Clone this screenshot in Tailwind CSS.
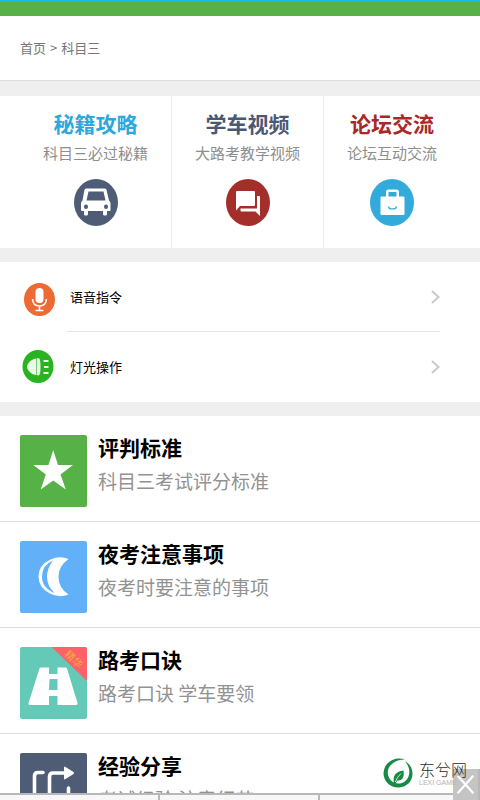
<!DOCTYPE html>
<html lang="zh-CN">
<head>
<meta charset="utf-8">
<meta name="viewport" content="width=device-width, initial-scale=1">
<title>科目三</title>
<script src="https://cdn.jsdelivr.net/npm/@tailwindcss/browser@4"></script>
</head>
<body class="flex h-screen flex-col overflow-hidden bg-[#efefef] font-['Noto_Sans_CJK_SC',sans-serif] text-black">
<header class="h-4 shrink-0 border-t-2 border-[#12bdea] bg-[#56b146]"></header>

<main class="min-h-0 flex-1 overflow-y-auto [scrollbar-width:none]">
  <nav aria-label="位置" class="flex h-[65px] items-center border-b border-[#dcdcdc] bg-white px-5 text-[13px] text-[#777]">
    <a href="#">首页</a><span class="px-1">&gt;</span><a href="#">科目三</a>
  </nav>

  <section class="mt-[15px] grid grid-cols-[152fr_152fr_136fr] bg-white px-5 text-center">
    <a href="#" class="flex h-[152px] flex-col items-center border-r border-[#ececec] pt-[11px]">
      <h2 class="text-[21px] leading-8 font-bold text-[#2ea7dc]">秘籍攻略</h2>
      <p class="text-[15px] leading-7 text-[#8e8e8e]">科目三必过秘籍</p>
      <svg class="mt-3 h-[47px] w-[44px]" viewBox="0 0 44 47">
        <ellipse cx="22" cy="23.500" rx="22" ry="23.500" fill="#4e5c77"/>
        <path fill="#fff" fill-rule="evenodd" d="M10.500 10.800Q11 9.500 12.500 9.500H30.500Q32 9.500 32.500 10.800L35 21.500Q36.500 22.500 36.500 24.500V31Q36.500 32 35.500 32H33V35Q33 36.500 31.500 36.500H30.500Q29 36.500 29 35V32H14V35Q14 36.500 12.500 36.500H11.500Q10 36.500 10 35V32H8Q7 32 7 31V24.500Q7 22.500 8.500 21.500ZM14.500 12.500L12.500 21.500H31.500L29.500 12.500Z"/>
        <ellipse cx="12" cy="27.800" rx="2" ry="2.200" fill="#4e5c77"/><ellipse cx="32" cy="27.800" rx="2" ry="2.200" fill="#4e5c77"/>
      </svg>
    </a>
    <a href="#" class="flex h-[152px] flex-col items-center border-r border-[#ececec] pt-[11px]">
      <h2 class="text-[21px] leading-8 font-bold text-[#4b5874]">学车视频</h2>
      <p class="text-[15px] leading-7 text-[#8e8e8e]">大路考教学视频</p>
      <svg class="mt-3 h-[47px] w-[44px]" viewBox="0 0 44 47">
        <ellipse cx="22" cy="23.500" rx="22" ry="23.500" fill="#a42f2a"/>
        <path fill="#fff" d="M11 12H28Q29 12 29 13V26Q29 27 28 27H14L10 31.500V13Q10 12 11 12ZM31 17H33Q34 17 34 18V37L29.500 32.500H15.500Q14.500 32.500 14.500 31.500V29.500H31Z"/>
      </svg>
    </a>
    <a href="#" class="flex h-[152px] flex-col items-center pt-[11px]">
      <h2 class="text-[21px] leading-8 font-bold text-[#a72a28]">论坛交流</h2>
      <p class="text-[15px] leading-7 text-[#8e8e8e]">论坛互动交流</p>
      <svg class="mt-3 h-[47px] w-[44px]" viewBox="0 0 44 47">
        <ellipse cx="22" cy="23.500" rx="22" ry="23.500" fill="#33aadc"/>
        <path fill="#fff" fill-rule="evenodd" d="M11.500 17.500H16V13Q16 10.500 18.500 10.500H26.500Q29 10.500 29 13V17.500H33.500Q34.500 17.500 34.500 18.500V35Q34.500 36 33.500 36H11.500Q10.500 36 10.500 35V18.500Q10.500 17.500 11.500 17.500ZM18.500 17.500H26.500V13H18.500Z"/>
        <path d="M18.500 27.500Q19 29.800 20.500 29.800H24.500Q26 29.800 26.500 27.500" fill="none" stroke="#33aadc" stroke-width="1.300"/>
      </svg>
    </a>
  </section>

  <ul class="mt-[14px] bg-white pr-10 pl-5 text-[13px]">
    <li>
      <a href="#" class="flex h-[70px] items-center">
        <svg class="h-10 w-[46px]" viewBox="0 0 46 40">
          <ellipse cx="19.500" cy="22.500" rx="15.500" ry="16.500" fill="#ed6a34"/>
          <rect x="15.500" y="11" width="8" height="15" rx="4" fill="#fff"/>
          <path d="M12.500 22Q13 29 19.500 29T26.500 22M19.500 29V33.500M15.500 33.500H23.500" fill="none" stroke="#fff" stroke-width="1.600"/>
        </svg>
        <span class="flex h-full flex-1 items-center justify-between border-b border-[#e6e6e6] pl-1">语音指令
          <svg class="h-4 w-[9px]" viewBox="0 0 9 16" fill="none" stroke="#c9c9c9" stroke-width="2"><path d="M1 2L7.500 8L1 14"/></svg>
        </span>
      </a>
    </li>
    <li>
      <a href="#" class="flex h-[70px] items-center">
        <svg class="h-10 w-[46px]" viewBox="0 0 46 40">
          <ellipse cx="18" cy="19.500" rx="15.500" ry="16.500" fill="#2ab321"/>
          <path fill="#e9f8e7" d="M16 11.500V28Q11.500 27.500 8.500 23.500Q5.500 19.800 8.500 16Q11.500 12 16 11.500ZM16.600 11.300H19Q20.500 12 20.500 19.800T19 28.200H16.600Z"/>
          <path d="M23.500 14H28.500M24 20H28.500M23.500 26H28.500" stroke="#e9f8e7" stroke-width="2"/>
        </svg>
        <span class="flex h-full flex-1 items-center justify-between pl-1">灯光操作
          <svg class="h-4 w-[9px]" viewBox="0 0 9 16" fill="none" stroke="#c9c9c9" stroke-width="2"><path d="M1 2L7.500 8L1 14"/></svg>
        </span>
      </a>
    </li>
  </ul>

  <ul class="mt-[14px] bg-white">
    <li>
      <a href="#" class="flex h-[106px] gap-[11px] border-b border-[#dedede] px-5 pt-[19px]">
        <svg class="h-[72px] w-[67px] shrink-0 rounded-xs bg-[#56b146]" viewBox="0 0 67 72">
          <path fill="#fff" d="M33.200 15L38 30H53L40.500 39.500L45.800 54.500L33.200 45.500L20.700 54.500L25.800 39.500L13.300 30H28.500Z"/>
        </svg>
        <div class="-mt-1">
          <h3 class="text-[21px] leading-8 font-bold">评判标准</h3>
          <p class="text-[19px] leading-9 text-[#929292]">科目三考试评分标准</p>
        </div>
      </a>
    </li>
    <li>
      <a href="#" class="flex h-[106px] gap-[11px] border-b border-[#dedede] px-5 pt-[19px]">
        <svg class="h-[72px] w-[67px] shrink-0 rounded-xs bg-[#61b0f8]" viewBox="0 0 67 72">
          <path fill="#fff" fill-rule="evenodd" d="M48.500 18Q38.500 25 38.500 36T48.500 53.500Q40 57 31 53Q18.500 47 18.500 35.500T30.500 18.500Q40 14.500 48.500 18ZM33 19.500Q22 24 22 35.500T34.500 52Q27 45 27 36T33 19.500Z"/>
        </svg>
        <div class="-mt-1">
          <h3 class="text-[21px] leading-8 font-bold">夜考注意事项</h3>
          <p class="text-[19px] leading-9 text-[#929292]">夜考时要注意的事项</p>
        </div>
      </a>
    </li>
    <li>
      <a href="#" class="flex h-[106px] gap-[11px] border-b border-[#dedede] px-5 pt-[19px]">
        <svg class="h-[72px] w-[67px] shrink-0 rounded-xs bg-[#64c9b6]" viewBox="0 0 67 72">
          <path fill="#fff" d="M21 20.500H29V27H37.500V20.500H45.500Q46.500 20.500 47 21.500L57.500 56Q58 58 56 58H37.500V49H29V58H10Q8 58 8.500 56L19.500 21.500Q20 20.500 21 20.500Z"/>
          <path fill="#64c9b6" d="M29.500 32H37.500V43H29Z"/>
          <path fill="#fc6268" d="M31.500 0H67V34Z"/>
          <text x="54" y="16" transform="rotate(43 54 12)" text-anchor="middle" font-size="10" fill="#f6b03c">精华</text>
        </svg>
        <div class="-mt-1">
          <h3 class="text-[21px] leading-8 font-bold">路考口诀</h3>
          <p class="text-[19px] leading-9 text-[#929292]">路考口诀 学车要领</p>
        </div>
      </a>
    </li>
    <li>
      <a href="#" class="flex h-[106px] gap-[11px] border-b border-[#dedede] px-5 pt-[19px]">
        <svg class="h-[72px] w-[67px] shrink-0 rounded-xs bg-[#4f5c75]" viewBox="0 0 67 72">
          <path d="M23 19.500H18Q14.500 19.500 14.500 23V56H48.500V35M45 20H33Q29.500 20 29.500 24V44" fill="none" stroke="#fff" stroke-width="3.600" stroke-linecap="round"/>
          <path fill="#fff" d="M44 14.500Q44 13 45.500 14L53.500 19Q54.500 20 53.500 21L45.500 26Q44 27 44 25.500Z"/>
        </svg>
        <div class="-mt-1">
          <h3 class="text-[21px] leading-8 font-bold">经验分享</h3>
          <p class="text-[19px] leading-9 text-[#929292]">考试经验 注意细节</p>
        </div>
      </a>
    </li>
  </ul>
</main>

<footer class="relative grid h-[7px] shrink-0 grid-cols-3 divide-x-2 divide-[#b8b8b8] border-t-2 border-[#b8b8b8] bg-[#f7f7f7]">
  <div></div><div></div><div></div>
  <button type="button" aria-label="关闭" class="absolute right-0 bottom-0 h-[31px] w-[27px] bg-[#c4c4c4]">
    <svg class="size-full" viewBox="0 0 27 31"><path d="M5 6L22 25M22 6L5 25" stroke="#fff" stroke-width="2.200"/></svg>
  </button>
  <div class="absolute right-[13px] bottom-3 flex items-center gap-1.5">
    <svg class="size-[30px]" viewBox="0 0 30 30">
      <path fill="#178a45" d="M22 1.500C12-2 1 4 .5 15C.3 24 8 30 16 29.500C24 29 29.500 23 29.500 16C29.500 10 26.500 5.500 22 3.500C26 8 27.500 13 25.500 18.500C23.500 24 17 27.500 11 24.500C4.500 21 3 13 7 8C10.500 3.500 16 1.500 22 1.500Z"/>
      <path fill="#178a45" d="M20.500 12.500C21.500 19 19.500 23 14.500 22.500L12.500 25.500L11 25C9.500 18.500 12 13.500 20.500 12.500Z"/>
      <path d="M12.300 24Q14 19 18 15.500" fill="none" stroke="#fff" stroke-width=".8"/>
    </svg>
    <div class="text-[#2b2b2b]">
      <p class="text-base leading-5 font-light">东兮网</p>
      <p class="font-['Liberation_Sans',sans-serif] text-[7px] leading-2 text-[#b3b3b3]">LEXI GAME</p>
    </div>
  </div>
</footer>
</body>
</html>
